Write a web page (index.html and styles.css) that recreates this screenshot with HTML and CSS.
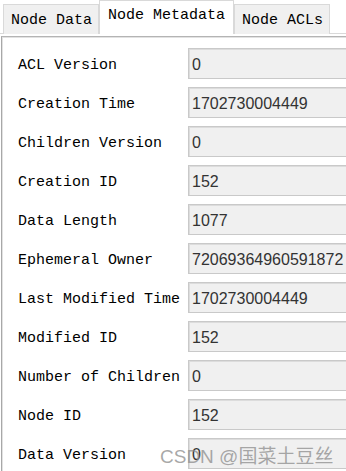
FILE: index.html
```html
<!DOCTYPE html>
<html lang="en">
<head>
    <meta charset="UTF-8">
    <meta name="viewport" content="width=device-width, initial-scale=1.0">
    <title>Node Metadata</title>
    <link rel="stylesheet" href="styles.css">
</head>
<body>
    <div class="window">
        <nav class="tabs">
            <div class="tab">Node Data</div>
            <div class="tab active">Node Metadata</div>
            <div class="tab">Node ACLs</div>
        </nav>

        <section class="panel">
            <div class="row"><span class="label">ACL Version</span><div class="field">0</div></div>
            <div class="row"><span class="label">Creation Time</span><div class="field">1702730004449</div></div>
            <div class="row"><span class="label">Children Version</span><div class="field">0</div></div>
            <div class="row"><span class="label">Creation ID</span><div class="field">152</div></div>
            <div class="row"><span class="label">Data Length</span><div class="field">1077</div></div>
            <div class="row"><span class="label">Ephemeral Owner</span><div class="field">72069364960591872</div></div>
            <div class="row"><span class="label">Last Modified Time</span><div class="field">1702730004449</div></div>
            <div class="row"><span class="label">Modified ID</span><div class="field">152</div></div>
            <div class="row"><span class="label">Number of Children</span><div class="field">0</div></div>
            <div class="row"><span class="label">Node ID</span><div class="field">152</div></div>
            <div class="row"><span class="label">Data Version</span><div class="field">0</div></div>
        </section>

        <div class="watermark">CSDN @国菜土豆丝</div>
    </div>
</body>
</html>
```

FILE: styles.css
```css
* {
    margin: 0;
    padding: 0;
    box-sizing: border-box;
}

body {
    background: #ffffff;
    overflow: hidden;
    font-family: "Liberation Mono", "DejaVu Sans Mono", monospace;
    color: #000000;
}

.window {
    position: relative;
    width: 346px;
    height: 471px;
    overflow: hidden;
}

/* Tabs */
.tabs {
    display: flex;
    align-items: flex-end;
    height: 34px;
    padding-left: 3px;
    border-bottom: 1px solid #d9d9d9;
}

.tab {
    height: 30px;
    padding: 2px 6px 0 7px;
    display: flex;
    align-items: center;
    font-size: 15px;
    background: #f0f0f0;
    border: 1px solid #d9d9d9;
    border-bottom: none;
    margin-bottom: -1px;
}

.tab.active {
    height: 34px;
    background: #ffffff;
    padding: 0 8px 4px 8px;
    border-color: #d9d9d9;
    position: relative;
    z-index: 1;
}

/* Panel */
.panel {
    margin: 2px 0 0 1px;
    border-top: 1px solid #b4b4b4;
    border-left: 1px solid #a8a8a8;
    box-shadow: inset 1px 1px 0 #e2e2e2;
    padding: 11px 0 0 16px;
    display: flex;
    flex-direction: column;
    gap: 9px;
    height: 440px;
}

.row {
    display: grid;
    grid-template-columns: 170px 200px;
    align-items: center;
    height: 30px;
}

.label {
    font-size: 15px;
    white-space: nowrap;
    padding-top: 3px;
}

.field {
    height: 31px;
    background: #f0f0f0;
    border: 1px solid #c9c9c9;
    box-shadow: inset 1px 1px 0 #dcdcdc;
    padding: 2px 0 0 3px;
    display: flex;
    align-items: center;
    font-family: "Liberation Sans", Arial, sans-serif;
    font-size: 16px;
    color: #333333;
}

.watermark {
    position: absolute;
    left: 160px;
    top: 441px;
    font-family: "Liberation Sans", "Noto Sans CJK SC", sans-serif;
    font-size: 19px;
    color: rgba(140, 140, 140, 0.75);
    white-space: nowrap;
}
```
